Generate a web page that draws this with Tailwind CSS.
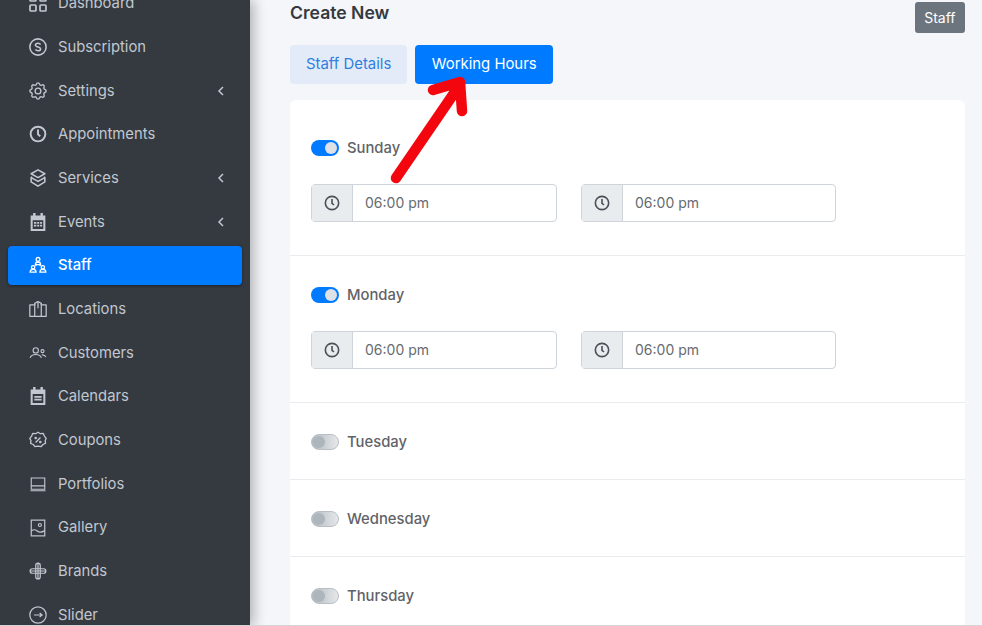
<!DOCTYPE html>
<html lang="en">
<head>
    <meta charset="UTF-8" />
    <title>Staff - Create New</title>
    <script src="https://cdn.jsdelivr.net/npm/@tailwindcss/browser@4"></script>
</head>
<body class="h-[626px] overflow-hidden bg-[#f4f6f9] font-['Inter','Liberation_Sans',sans-serif]">
<div class="relative flex h-[626px] overflow-hidden">
    <!-- Sidebar -->
    <aside class="z-10 h-[626px] w-[250px] shrink-0 overflow-hidden bg-[#343a40] px-2 text-[14.8px] text-[#c2c7d0] shadow-[4px_0_12px_rgba(0,0,0,0.28)]">
        <ul class="-mt-[16.25px]">
            <li class="mb-[4.7px] flex h-[39px] items-center rounded pl-[21px] pr-4">
                <svg class="mr-[11px] size-[18px] shrink-0" viewBox="3 3 18 18" fill="none" stroke="currentColor" stroke-width="1.700"><rect x="4" y="4" width="6" height="6" rx="1"/><rect x="14" y="4" width="6" height="6" rx="1"/><rect x="4" y="14" width="6" height="6" rx="1"/><rect x="14" y="14" width="6" height="6" rx="1"/></svg>
                <span>Dashboard</span>
            </li>
            <li class="mb-[4.7px] flex h-[39px] items-center rounded pl-[21px] pr-4">
                <svg class="mr-[11px] size-[18px] shrink-0" viewBox="1.500 1.500 21 21" fill="none" stroke="currentColor" stroke-width="1.800"><circle cx="12" cy="12" r="9.500"/><path d="M15 9.200c-.5-1-1.600-1.600-3-1.600-1.700 0-3 .9-3 2.200 0 3 6 1.500 6 4.400 0 1.300-1.300 2.200-3 2.200-1.400 0-2.500-.6-3-1.600"/></svg>
                <span>Subscription</span>
            </li>
            <li class="mb-[4.7px] flex h-[39px] items-center rounded pl-[21px] pr-4">
                <svg class="mr-[11px] size-[18px] shrink-0" viewBox="2 2 20 20" fill="none" stroke="currentColor" stroke-width="1.500" stroke-linejoin="round"><path d="M10.300 4.300c.4-1.800 3-1.800 3.400 0a1.700 1.700 0 0 0 2.600 1.100c1.500-.9 3.300.8 2.400 2.400a1.700 1.700 0 0 0 1 2.500c1.800.4 1.800 3 0 3.400a1.700 1.700 0 0 0-1 2.600c.9 1.500-.8 3.300-2.400 2.400a1.700 1.700 0 0 0-2.600 1c-.4 1.800-3 1.800-3.400 0a1.700 1.700 0 0 0-2.600-1c-1.500.9-3.300-.8-2.400-2.400a1.700 1.700 0 0 0-1-2.600c-1.800-.4-1.800-3 0-3.400a1.700 1.700 0 0 0 1-2.500c-.9-1.600.8-3.300 2.400-2.400a1.700 1.700 0 0 0 2.600-1.100z"/><circle cx="12" cy="12" r="3.200"/></svg>
                <span>Settings</span>
                <svg class="ml-auto size-[10px]" viewBox="0 0 10 10" fill="none" stroke="currentColor" stroke-width="1.500"><path d="M7 1 3 5l4 4"/></svg>
            </li>
            <li class="mb-[4.7px] flex h-[39px] items-center rounded pl-[21px] pr-4">
                <svg class="mr-[11px] size-[18px] shrink-0" viewBox="0 0 24 24" fill="none" stroke="currentColor" stroke-width="2.600"><circle cx="12" cy="12" r="9.800"/><path d="M12 6v6.500l3 2.500"/></svg>
                <span>Appointments</span>
            </li>
            <li class="mb-[4.7px] flex h-[39px] items-center rounded pl-[21px] pr-4">
                <svg class="mr-[11px] size-[18px] shrink-0" viewBox="2 1.500 20 21" fill="none" stroke="currentColor" stroke-width="1.800" stroke-linejoin="round"><path d="m12 2.500 8 4.500-8 4.500L4 7z"/><path d="m5 10.500-1 1 8 4.500 8-4.500-1-1"/><path d="M4 12v4.500l8 5 8-5V12"/></svg>
                <span>Services</span>
                <svg class="ml-auto size-[10px]" viewBox="0 0 10 10" fill="none" stroke="currentColor" stroke-width="1.500"><path d="M7 1 3 5l4 4"/></svg>
            </li>
            <li class="mb-[4.7px] flex h-[39px] items-center rounded pl-[21px] pr-4">
                <svg class="mr-[11px] size-[18px] shrink-0" viewBox="2 1 20 22" fill="currentColor"><path d="M6 1h3v3h6V1h3v3h3v19H3V4h3zM5.500 10v10.500h13V10z"/><path d="M7 12h3v2H7zm4 0h2.500v2H11zm3.500 0H17v2h-2.500zM7 15.500h3v2H7zm4 0h2.500v2H11zm3.500 0H17v2h-2.500z"/></svg>
                <span>Events</span>
                <svg class="ml-auto size-[10px]" viewBox="0 0 10 10" fill="none" stroke="currentColor" stroke-width="1.500"><path d="M7 1 3 5l4 4"/></svg>
            </li>
            <li class="mb-[4.7px] flex h-[39px] items-center rounded bg-[#007bff] pl-[21px] pr-4 font-medium text-white shadow-[0_1px_3px_rgba(0,0,0,0.4)]">
                <svg class="mr-[11px] size-[18px] shrink-0" viewBox="0 0 24 24" fill="none" stroke="currentColor" stroke-width="1.700"><circle cx="12" cy="4.500" r="2.500"/><path d="M8.500 11.500c0-2 1.500-3.500 3.500-3.500s3.500 1.500 3.500 3.500z"/><circle cx="5.500" cy="15" r="2.200"/><path d="M1.500 21.500c0-2.300 1.800-3.800 4-3.800s4 1.500 4 3.800z"/><circle cx="18.500" cy="15" r="2.200"/><path d="M14.500 21.500c0-2.300 1.800-3.800 4-3.800s4 1.500 4 3.800z"/><path d="m8.500 13 1.500-1.500M15.500 13 14 11.500"/></svg>
                <span>Staff</span>
            </li>
            <li class="mb-[4.7px] flex h-[39px] items-center rounded pl-[21px] pr-4">
                <svg class="mr-[11px] size-[18px] shrink-0" viewBox="1 1 22 22" fill="none" stroke="currentColor" stroke-width="1.500" stroke-linejoin="round"><path d="M8 7H2v14h20V7h-6M8 7V5l4-2 4 2v2"/><path d="M8 5v16M16 5v16M12 3v8"/></svg>
                <span>Locations</span>
            </li>
            <li class="mb-[4.7px] flex h-[39px] items-center rounded pl-[21px] pr-4">
                <svg class="mr-[11px] size-[18px] shrink-0" viewBox="0 0 24 24" fill="none" stroke="currentColor" stroke-width="1.500"><circle cx="9" cy="8.500" r="3.500"/><circle cx="18" cy="9.500" r="2"/><path d="M1.500 18.500c1-3 4.200-4.500 7.500-4.500s6.500 1.500 7.500 4.500M17 14.500c2.500-.3 4.800 1 5.500 3"/></svg>
                <span>Customers</span>
            </li>
            <li class="mb-[4.7px] flex h-[39px] items-center rounded pl-[21px] pr-4">
                <svg class="mr-[11px] size-[18px] shrink-0" viewBox="2 1 20 22" fill="currentColor"><path d="M6 1h3v3h6V1h3v3h3v19H3V4h3zM5.500 9.500v11h13v-11z"/><path d="M7.500 12h9v2h-9zm0 3.500h9v2h-9z"/></svg>
                <span>Calendars</span>
            </li>
            <li class="mb-[4.7px] flex h-[39px] items-center rounded pl-[21px] pr-4">
                <svg class="mr-[11px] size-[18px] shrink-0" viewBox="1 1 22 22" fill="none" stroke="currentColor" stroke-width="1.600" stroke-linejoin="round"><path d="m12 2.500 3 1.800 3.500-.3 1.300 3.200 2.200 2.800-1.200 2.800.4 3.400-3.200 1.300-2.300 2.700-3.700-.8-3.700.8L6.200 17.500 3 16.200l.4-3.400L2 10l2.200-2.800L5.500 4l3.500.3z"/><path d="m9 15 6-6"/><circle cx="9.200" cy="9.500" r=".8"/><circle cx="14.800" cy="14.500" r=".8"/></svg>
                <span>Coupons</span>
            </li>
            <li class="mb-[4.7px] flex h-[39px] items-center rounded pl-[21px] pr-4">
                <svg class="mr-[11px] size-[18px] shrink-0" viewBox="0 0 24 24" fill="none" stroke="currentColor" stroke-width="1.500"><path d="M3 4h18v15H3zM3 14.500h18M2 21h20"/></svg>
                <span>Portfolios</span>
            </li>
            <li class="mb-[4.7px] flex h-[39px] items-center rounded pl-[21px] pr-4">
                <svg class="mr-[11px] size-[18px] shrink-0" viewBox="0 0 24 24" fill="none" stroke="currentColor" stroke-width="1.600"><rect x="3" y="1.500" width="18" height="21"/><circle cx="14.500" cy="8" r="2"/><path d="M3 16c3-2.500 5-2.500 8 0s6 2 10-.5"/></svg>
                <span>Gallery</span>
            </li>
            <li class="mb-[4.7px] flex h-[39px] items-center rounded pl-[21px] pr-4">
                <svg class="mr-[11px] size-[18px] shrink-0" viewBox="0 0 24 24" fill="none" stroke="currentColor" stroke-width="1.600"><path d="M9 9V4.500a3 3 0 0 1 6 0V9h4.500a3 3 0 0 1 0 6H15v4.500a3 3 0 0 1-6 0V15H4.500a3 3 0 0 1 0-6zM9 9h6v6H9zM12 1.500v21M1.500 12h21"/></svg>
                <span>Brands</span>
            </li>
            <li class="mb-[4.7px] flex h-[39px] items-center rounded pl-[21px] pr-4">
                <svg class="mr-[11px] size-[18px] shrink-0" viewBox="1 1 22 22" fill="none" stroke="currentColor" stroke-width="1.500"><circle cx="12" cy="12" r="10"/><path d="M7 12h10M14 9.500l3 2.500-3 2.500"/></svg>
                <span>Slider</span>
            </li>
        </ul>
    </aside>

    <!-- Main content -->
    <main class="min-w-0 flex-1 pl-10 pr-[17px] text-[#5f6368]">
        <div class="flex items-start justify-between pt-[2px]">
            <h1 class="text-[17.6px] font-semibold leading-[21px] text-[#343a40]">Create New</h1>
            <span class="flex h-[31px] items-center rounded-[3px] bg-[#6c757d] px-[9.5px] text-[14px] text-white">Staff</span>
        </div>

        <div class="mt-3 flex gap-2 text-[14.9px]">
            <button class="h-[39px] rounded bg-[#e3ebf8] px-4 pb-[1px] text-[#2f7fe0]">Staff Details</button>
            <button class="h-[39px] rounded bg-[#007bff] px-[16.5px] pb-[1px] text-white">Working Hours</button>
        </div>

        <div class="mt-4 h-[600px] rounded-md bg-white text-[14.8px]">
            <div class="h-[156px] border-b border-[#e9ecef] pl-[21px] pt-10">
                <div class="flex h-4 items-center">
                    <span class="mr-2 flex h-4 w-7 items-center justify-end rounded-full bg-[#007bff] pr-[2px]"><span class="size-3 rounded-full bg-[#dee2e6]"></span></span>
                    <span class="font-medium">Sunday</span>
                </div>
                <div class="mt-[28px] flex gap-6">
                    <div class="flex h-[38px] w-[246px] rounded border border-[#ced4da] bg-white">
                        <span class="flex w-[41px] items-center justify-center border-r border-[#ced4da] bg-[#e9ecef]"><svg class="size-4" viewBox="0 0 24 24" fill="none" stroke="#495057" stroke-width="2.400"><circle cx="12" cy="12" r="10"/><path d="M12 6v6.500l3 2.500"/></svg></span>
                        <span class="flex items-center pb-[1px] pl-3 text-[14px] text-[#666b70]">06:00 pm</span>
                    </div>
                    <div class="flex h-[38px] w-[255px] rounded border border-[#ced4da] bg-white">
                        <span class="flex w-[41px] items-center justify-center border-r border-[#ced4da] bg-[#e9ecef]"><svg class="size-4" viewBox="0 0 24 24" fill="none" stroke="#495057" stroke-width="2.400"><circle cx="12" cy="12" r="10"/><path d="M12 6v6.500l3 2.500"/></svg></span>
                        <span class="flex items-center pb-[1px] pl-3 text-[14px] text-[#666b70]">06:00 pm</span>
                    </div>
                </div>
            </div>
            <div class="h-[147px] border-b border-[#e9ecef] pl-[21px] pt-[31px]">
                <div class="flex h-4 items-center">
                    <span class="mr-2 flex h-4 w-7 items-center justify-end rounded-full bg-[#007bff] pr-[2px]"><span class="size-3 rounded-full bg-[#dee2e6]"></span></span>
                    <span class="font-medium">Monday</span>
                </div>
                <div class="mt-[28px] flex gap-6">
                    <div class="flex h-[38px] w-[246px] rounded border border-[#ced4da] bg-white">
                        <span class="flex w-[41px] items-center justify-center border-r border-[#ced4da] bg-[#e9ecef]"><svg class="size-4" viewBox="0 0 24 24" fill="none" stroke="#495057" stroke-width="2.400"><circle cx="12" cy="12" r="10"/><path d="M12 6v6.500l3 2.500"/></svg></span>
                        <span class="flex items-center pb-[1px] pl-3 text-[14px] text-[#666b70]">06:00 pm</span>
                    </div>
                    <div class="flex h-[38px] w-[255px] rounded border border-[#ced4da] bg-white">
                        <span class="flex w-[41px] items-center justify-center border-r border-[#ced4da] bg-[#e9ecef]"><svg class="size-4" viewBox="0 0 24 24" fill="none" stroke="#495057" stroke-width="2.400"><circle cx="12" cy="12" r="10"/><path d="M12 6v6.500l3 2.500"/></svg></span>
                        <span class="flex items-center pb-[1px] pl-3 text-[14px] text-[#666b70]">06:00 pm</span>
                    </div>
                </div>
            </div>
            <div class="flex h-[77px] items-center border-b border-[#e9ecef] pl-[21px] pt-[2px]">
                <span class="mr-2 flex h-4 w-7 items-center rounded-full border border-[#b8bec4] bg-linear-to-r from-[#b4bbc1] to-[#e6e8ea] pl-[1px]"><span class="size-3 rounded-full bg-[#adb5bd]"></span></span>
                <span class="font-medium">Tuesday</span>
            </div>
            <div class="flex h-[77px] items-center border-b border-[#e9ecef] pl-[21px] pt-[2px]">
                <span class="mr-2 flex h-4 w-7 items-center rounded-full border border-[#b8bec4] bg-linear-to-r from-[#b4bbc1] to-[#e6e8ea] pl-[1px]"><span class="size-3 rounded-full bg-[#adb5bd]"></span></span>
                <span class="font-medium">Wednesday</span>
            </div>
            <div class="flex h-[77px] items-center border-b border-[#e9ecef] pl-[21px] pt-[2px]">
                <span class="mr-2 flex h-4 w-7 items-center rounded-full border border-[#b8bec4] bg-linear-to-r from-[#b4bbc1] to-[#e6e8ea] pl-[1px]"><span class="size-3 rounded-full bg-[#adb5bd]"></span></span>
                <span class="font-medium">Thursday</span>
            </div>
        </div>
    </main>

    <!-- Annotation arrow over the page -->
    <svg class="pointer-events-none absolute left-0 top-0 z-20" width="982" height="626" viewBox="0 0 982 626" fill="none" stroke="#f4060f" stroke-width="10.500" stroke-linecap="round" stroke-linejoin="round">
        <path d="M396 178 459 86M433 90l27-8 2 29"/>
    </svg>
    <!-- Screenshot edge -->
    <div class="absolute bottom-0 left-0 z-20 h-px w-full bg-[#d4d4d4]"></div>
</div>
</body>
</html>
